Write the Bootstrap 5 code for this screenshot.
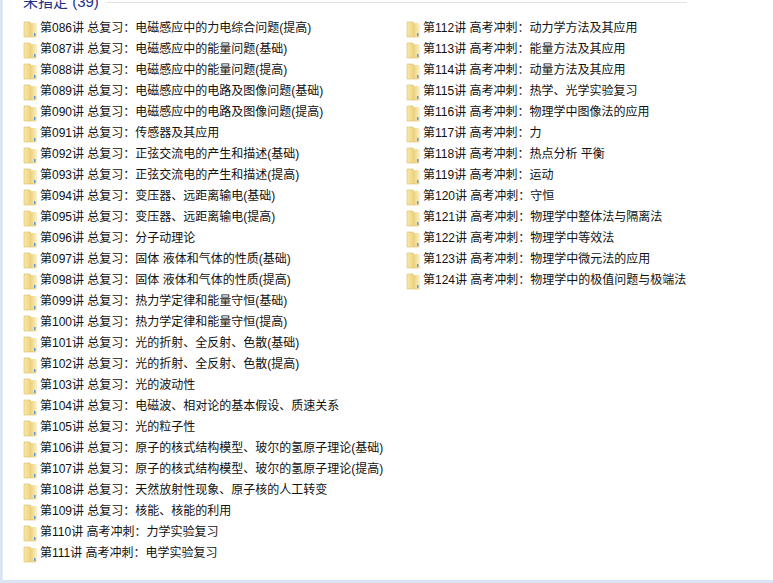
<!DOCTYPE html>
<html lang="zh"><head><meta charset="utf-8"><title>未指定</title>
<link href="https://cdn.jsdelivr.net/npm/bootstrap@5.3.0/dist/css/bootstrap.min.css" rel="stylesheet">
<style>
html,body{height:583px;overflow:hidden;background:#fff}
body{font-family:"Liberation Sans","Noto Sans CJK SC",sans-serif;font-size:12px;color:#111}
.pane{height:580px;margin-left:2px;background:#fff;border-left:1px solid #e3ebf6;overflow:hidden;padding-left:20px}
.wrap-edge{background:#d9e5f5;height:583px}
.grp-head{height:18px;margin-top:-7px;width:664px}
.grp-title{font-size:15px;line-height:18px;color:#1e3287}
.grp-line{height:1px;background:#e2e2e2}
.cols{margin-top:7px}
.col-a{width:383px}
.item{height:21px;line-height:21px;white-space:nowrap}
.item svg{width:14px;height:18px;margin-right:3px;flex:none}
</style></head><body>
<div class="wrap-edge"><div class="pane">
<div class="grp-head d-flex align-items-center gap-2"><span class="grp-title">未指定 (39)</span><div class="grp-line flex-grow-1"></div></div>
<div class="cols d-flex" id="cols"></div>
</div></div>
<svg width="0" height="0" class="d-block"><defs>
<linearGradient id="f1" x1="0" x2="1" y1="0" y2="0"><stop offset="0" stop-color="#f8e9a8"/><stop offset="1" stop-color="#e5c25e"/></linearGradient>
<linearGradient id="f2" x1="0" x2="1" y1="0" y2="0"><stop offset="0" stop-color="#e9cd7a"/><stop offset="1" stop-color="#fbf0be"/></linearGradient>
<symbol id="fold" viewBox="0 0 14 18"><path d="M1 2h6l1 2h5v13H1z" fill="url(#f1)" stroke="#d9bc68" stroke-width=".6"/><path d="M7 4l3-1h3.5v13.5H7z" fill="url(#f2)"/><rect x="11" y="13" width="1.5" height="3" fill="#5b9bd5"/></symbol>
</defs></svg>
<script>
const d=[["086","总复习：电磁感应中的力电综合问题(提高)"],["087","总复习：电磁感应中的能量问题(基础)"],["088","总复习：电磁感应中的能量问题(提高)"],["089","总复习：电磁感应中的电路及图像问题(基础)"],["090","总复习：电磁感应中的电路及图像问题(提高)"],["091","总复习：传感器及其应用"],["092","总复习：正弦交流电的产生和描述(基础)"],["093","总复习：正弦交流电的产生和描述(提高)"],["094","总复习：变压器、远距离输电(基础)"],["095","总复习：变压器、远距离输电(提高)"],["096","总复习：分子动理论"],["097","总复习：固体 液体和气体的性质(基础)"],["098","总复习：固体 液体和气体的性质(提高)"],["099","总复习：热力学定律和能量守恒(基础)"],["100","总复习：热力学定律和能量守恒(提高)"],["101","总复习：光的折射、全反射、色散(基础)"],["102","总复习：光的折射、全反射、色散(提高)"],["103","总复习：光的波动性"],["104","总复习：电磁波、相对论的基本假设、质速关系"],["105","总复习：光的粒子性"],["106","总复习：原子的核式结构模型、玻尔的氢原子理论(基础)"],["107","总复习：原子的核式结构模型、玻尔的氢原子理论(提高)"],["108","总复习：天然放射性现象、原子核的人工转变"],["109","总复习：核能、核能的利用"],["110","高考冲刺：力学实验复习"],["111","高考冲刺：电学实验复习"]];
const e=[["112","高考冲刺：动力学方法及其应用"],["113","高考冲刺：能量方法及其应用"],["114","高考冲刺：动量方法及其应用"],["115","高考冲刺：热学、光学实验复习"],["116","高考冲刺：物理学中图像法的应用"],["117","高考冲刺：力"],["118","高考冲刺：热点分析 平衡"],["119","高考冲刺：运动"],["120","高考冲刺：守恒"],["121","高考冲刺：物理学中整体法与隔离法"],["122","高考冲刺：物理学中等效法"],["123","高考冲刺：物理学中微元法的应用"],["124","高考冲刺：物理学中的极值问题与极端法"]];
const mk=(a,c)=>`<div class="${c}">`+a.map(x=>`<div class="item d-flex align-items-center"><svg><use href="#fold"/></svg><span>第${x[0]}讲 ${x[1]}</span></div>`).join("")+"</div>";
document.getElementById("cols").innerHTML=mk(d,"col-a")+mk(e,"col-b");
</script>
</body></html>
